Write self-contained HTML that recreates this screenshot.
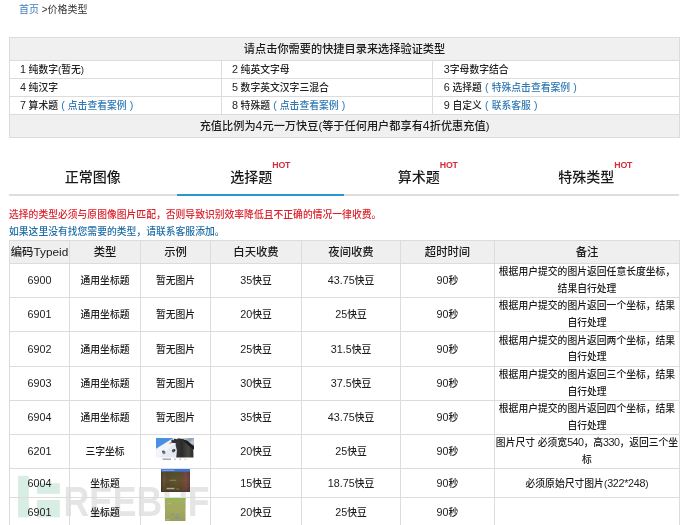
<!DOCTYPE html>
<html lang="zh-CN">
<head>
<meta charset="utf-8">
<title>价格类型</title>
<style>
*{box-sizing:border-box;margin:0;padding:0}
html,body{width:690px;height:525px;overflow:hidden;background:#fff}
body{position:relative;font-family:"Liberation Sans","Noto Sans CJK SC",sans-serif;font-size:9.8px;color:#222;-webkit-font-smoothing:antialiased}
a{text-decoration:none;color:#3079b5}
.page{position:absolute;left:0;top:0;width:690px;height:525px;overflow:hidden;will-change:transform;background:#fff}
.crumb{position:absolute;left:19px;top:1px;height:17px;line-height:17px;font-size:10px;color:#333;white-space:nowrap}
.crumb a{color:#3f7fb8}

/* quick directory table */
.quick{position:absolute;left:9px;top:37px;width:670px;border-collapse:collapse;table-layout:fixed;border:1px solid #d9d9d9}
.quick td,.quick th{border:1px solid #dcdcdc;white-space:nowrap;overflow:hidden}
.quick th{height:23px;background:#f0f0f0;font-weight:500;font-size:11.2px;text-align:center;color:#1c1c1c;line-height:20px}
.quick td{font-weight:500;height:18px;padding-left:9.9px;font-size:9.8px;line-height:16px;color:#222;text-align:left}
.quick .p{display:inline-block;width:9.8px;text-align:center;font-weight:normal;font-size:10.6px;line-height:0}
.quick tr.foot th{height:23px;line-height:19px;padding-top:1.6px}
.quick td.c3{padding-left:10.8px}

/* tabs */
.tabs{position:absolute;left:9px;top:156px;width:670px;height:40px;border-bottom:2px solid #dddddd;display:flex}
.tab{flex:1 1 0;height:40px;text-align:center;font-size:14px;font-weight:500;line-height:42px;color:#1a1a1a;position:relative;white-space:nowrap}
.tab.on:after{content:'';position:absolute;left:0;right:0;top:37.8px;height:2.3px;background:#2798cd}
.tab sup{font-size:8.8px;color:#d42f3a;font-weight:bold;letter-spacing:-0.2px;position:relative;top:-1.3px;vertical-align:top;line-height:20px}

.note{position:absolute;left:9px;white-space:nowrap;font-size:9.8px;line-height:14px;height:14px}
.note.red{top:207.5px;color:#dc1f29;font-weight:500}
.note.blue{top:225px;color:#1f6ea6;font-weight:500}

/* price table */
.price{position:absolute;left:9px;top:240px;width:670px;border-collapse:collapse;table-layout:fixed}
.price th,.price td{border:1px solid #dcdcdc;text-align:center;vertical-align:middle;overflow:hidden}
.price th{height:23px;background:#efefef;font-size:11.35px;font-weight:500;color:#1a1a1a;line-height:18px;white-space:nowrap}
.price td{font-weight:500;font-size:9.8px;line-height:16.4px;color:#1c1c1c;padding:2.4px 0 0}
.price tr.r1 td{height:34px}
.price tr.r1b td{height:35px}
.price tr.r2 td{height:29px}
.price th i{font-size:1.04em}
.price td.memo{padding:0;white-space:normal}
.price td.memo i{font-size:1.1em;letter-spacing:-0.55px}
.price td.memo.one{padding-top:2.4px}
.price td.memo.one i{font-size:1.1em;letter-spacing:-0.3px}
.price td.pic{padding:0}
i{font-style:normal;font-size:1.1em;line-height:0}
.thumb{display:block;margin:0 auto;position:relative}
.price td.pic{vertical-align:top;line-height:0}
.wm{position:absolute;left:0;top:0;width:690px;height:525px;pointer-events:none}
</style>
</head>
<body>
<div class="page">
<div class="crumb"><a>首页</a> &gt;价格类型</div>

<table class="quick">
<colgroup><col style="width:212px"><col style="width:211px"><col style="width:247px"></colgroup>
<tr><th colspan="3">请点击你需要的快捷目录来选择验证类型</th></tr>
<tr><td><i>1</i> 纯数字(暂无)</td><td><i>2</i> 纯英文字母</td><td class="c3"><i>3</i>字母数字结合</td></tr>
<tr><td><i>4</i> 纯汉字</td><td><i>5</i> 数字英文汉字三混合</td><td class="c3"><i>6</i> 选择题<a><b class="p">(</b>特殊点击查看案例<b class="p">)</b></a></td></tr>
<tr><td><i>7</i> 算术题<a><b class="p">(</b>点击查看案例<b class="p">)</b></a></td><td><i>8</i> 特殊题<a><b class="p">(</b>点击查看案例<b class="p">)</b></a></td><td class="c3"><i>9</i> 自定义<a><b class="p">(</b>联系客服<b class="p">)</b></a></td></tr>
<tr class="foot"><th colspan="3">充值比例为<i>4</i>元一万快豆(等于任何用户都享有<i>4</i>折优惠充值)</th></tr>
</table>

<div class="tabs">
<div class="tab">正常图像</div>
<div class="tab on">选择题<sup>HOT</sup></div>
<div class="tab">算术题<sup>HOT</sup></div>
<div class="tab">特殊类型<sup>HOT</sup></div>
</div>

<div class="note red">选择的类型必须与原图像图片匹配，否则导致识别效率降低且不正确的情况一律收费。</div>
<div class="note blue">如果这里没有找您需要的类型，请联系客服添加。</div>

<svg class="wm" width="690" height="525" viewBox="0 0 690 525">
<g fill="#d8ede4"><rect x="18" y="475.8" width="10.8" height="41.6"/><rect x="37" y="483.2" width="22.8" height="10.6"/><rect x="37" y="500" width="22.8" height="17.4"/></g>
<text x="63.5" y="515.8" font-family="'Liberation Sans',sans-serif" font-weight="bold" font-size="43.3" fill="#e5e5e5" textLength="146" lengthAdjust="spacingAndGlyphs">REEBUF</text>
</svg>
<table class="price">
<colgroup><col style="width:60px"><col style="width:71px"><col style="width:70px"><col style="width:91px"><col style="width:99px"><col style="width:94px"><col style="width:185px"></colgroup>
<tr><th>编码<i>Typeid</i></th><th>类型</th><th>示例</th><th>白天收费</th><th>夜间收费</th><th>超时时间</th><th>备注</th></tr>
<tr class="r1"><td><i>6900</i></td><td>通用坐标题</td><td>暂无图片</td><td><i>35</i>快豆</td><td><i>43.75</i>快豆</td><td><i>90</i>秒</td><td class="memo">根据用户提交的图片返回任意长度坐标，结果自行处理</td></tr>
<tr class="r1"><td><i>6901</i></td><td>通用坐标题</td><td>暂无图片</td><td><i>20</i>快豆</td><td><i>25</i>快豆</td><td><i>90</i>秒</td><td class="memo">根据用户提交的图片返回一个坐标，结果自行处理</td></tr>
<tr class="r1b"><td><i>6902</i></td><td>通用坐标题</td><td>暂无图片</td><td><i>25</i>快豆</td><td><i>31.5</i>快豆</td><td><i>90</i>秒</td><td class="memo">根据用户提交的图片返回两个坐标，结果自行处理</td></tr>
<tr class="r1"><td><i>6903</i></td><td>通用坐标题</td><td>暂无图片</td><td><i>30</i>快豆</td><td><i>37.5</i>快豆</td><td><i>90</i>秒</td><td class="memo">根据用户提交的图片返回三个坐标，结果自行处理</td></tr>
<tr class="r1"><td><i>6904</i></td><td>通用坐标题</td><td>暂无图片</td><td><i>35</i>快豆</td><td><i>43.75</i>快豆</td><td><i>90</i>秒</td><td class="memo">根据用户提交的图片返回四个坐标，结果自行处理</td></tr>
<tr class="r1"><td><i>6201</i></td><td>三字坐标</td><td class="pic"><svg class="thumb" style="margin-top:3px;left:-0.7px;top:-0.3px" width="38" height="23" viewBox="0 0 38 23">
<defs><linearGradient id="rk" x1="0" y1="0" x2="1" y2="1"><stop offset="0" stop-color="#dfe5ec"/><stop offset="0.45" stop-color="#8e9db0"/><stop offset="0.7" stop-color="#c4ccd6"/><stop offset="1" stop-color="#6f7d90"/></linearGradient>
<linearGradient id="pg" x1="0" y1="0" x2="1" y2="0"><stop offset="0" stop-color="#3a3a3a"/><stop offset="0.35" stop-color="#2c2c2c"/><stop offset="0.7" stop-color="#4a4744"/><stop offset="1" stop-color="#2a2a2a"/></linearGradient>
<filter id="sf" x="-5%" y="-5%" width="110%" height="110%"><feGaussianBlur stdDeviation="0.35"/></filter>
<clipPath id="c1"><rect x="0" y="0" width="38" height="19.4"/></clipPath></defs>
<g clip-path="url(#c1)"><g filter="url(#sf)">
<rect x="-1" y="-1" width="40" height="21.5" fill="#e4eaf2"/>
<polygon points="-1,-1 19,-1 -1,11.2" fill="#4b8fe2"/>
<polygon points="0,11.6 19,-0.5 21,3 3,19.5 0,19.5" fill="#f2f5f9"/>
<rect x="26" y="-1" width="13" height="9.5" fill="url(#rk)"/>
<polygon points="19.6,2.6 22.4,0.3 27.5,1.2 33.8,5.6 37.2,10.6 37.4,20 20.2,20 20.9,12.5 19.7,7.4" fill="url(#pg)"/>
<polygon points="26.5,1.6 31,2.6 38,8.2 38,11.8 31.5,6.8" fill="#1d1d1d"/>
<ellipse cx="18.4" cy="2.9" rx="3.1" ry="2.2" fill="#2b3038"/>
<circle cx="17.2" cy="1.5" r="0.75" fill="#f4f7fb"/>
<polygon points="12.3,5.8 15.9,3.8 16.5,5" fill="#a9564c"/>
<ellipse cx="7.9" cy="14.3" rx="1.5" ry="1.9" fill="#596270" opacity=".85"/>
<ellipse cx="6.9" cy="13.4" rx="0.8" ry="0.9" fill="#39404b"/>
<ellipse cx="17.3" cy="12.7" rx="1.4" ry="1.7" fill="#3a414c" opacity=".9"/>
<ellipse cx="18.6" cy="12.3" rx="0.7" ry="1.2" fill="#2c323b"/>
</g></g>
<rect x="6.5" y="20.4" width="8.5" height="1.6" fill="#8a8a8a" opacity=".7"/>
<rect x="18" y="20.6" width="2" height="1.2" fill="#bdbdbd"/><rect x="23.5" y="20.6" width="1.6" height="1.2" fill="#b0b0b0"/><rect x="28" y="20.8" width="2.4" height="1" fill="#d6d6d6"/>
</svg></td><td><i>20</i>快豆</td><td><i>25</i>快豆</td><td><i>90</i>秒</td><td class="memo">图片尺寸 必须宽<i>540</i>，高<i>330</i>，返回三个坐标</td></tr>
<tr class="r2"><td><i>6004</i></td><td>坐标题</td><td class="pic"><svg class="thumb" style="margin-top:0.5px;left:-0.3px;top:-0.8px" width="29.4" height="23" viewBox="0 0 29 23" preserveAspectRatio="none">
<defs><linearGradient id="bw" x1="0" y1="0" x2="1" y2="0"><stop offset="0" stop-color="#4a3a2a"/><stop offset="0.1" stop-color="#6a5434"/><stop offset="0.2" stop-color="#5a4a2e"/><stop offset="0.45" stop-color="#5b552f"/><stop offset="0.7" stop-color="#65502f"/><stop offset="0.86" stop-color="#7e4c44"/><stop offset="1" stop-color="#5c4032"/></linearGradient>
<linearGradient id="bw2" x1="0" y1="0" x2="0" y2="1"><stop offset="0" stop-color="#000" stop-opacity=".12"/><stop offset="0.5" stop-color="#000" stop-opacity="0"/><stop offset="1" stop-color="#000" stop-opacity=".18"/></linearGradient></defs>
<rect width="29" height="23" fill="url(#bw)"/>
<rect width="29" height="23" fill="url(#bw2)"/>
<rect width="29" height="2.7" fill="#3d74d8"/>
<rect x="1.2" y="0.8" width="12" height="1.1" fill="#9db8ea" opacity=".75"/>
<rect x="8.5" y="10.8" width="6.5" height="1" fill="#9a8e62" opacity=".8"/>
<rect x="5.5" y="18.8" width="7.8" height="1.5" fill="#c4b4a2" opacity=".85"/>
<rect x="15" y="19.6" width="3" height="0.9" fill="#968e6a" opacity=".8"/>
<rect x="0" y="21.6" width="29" height="1.4" fill="#473729" opacity=".6"/>
</svg></td><td><i>15</i>快豆</td><td><i>18.75</i>快豆</td><td><i>90</i>秒</td><td class="memo one">必须原始尺寸图片(<i>322*248</i>)</td></tr>
<tr class="r2"><td><i>6901</i></td><td>坐标题</td><td class="pic"><svg class="thumb" style="margin-top:0.6px;top:-0.4px" width="20.5" height="23.2" viewBox="0 0 20.5 23" preserveAspectRatio="none">
<defs><linearGradient id="gw" x1="0" y1="0" x2="0" y2="1"><stop offset="0" stop-color="#93bd55"/><stop offset="0.08" stop-color="#a4ae62"/><stop offset="0.6" stop-color="#a3a85e"/><stop offset="1" stop-color="#989f5c"/></linearGradient></defs>
<rect width="20.5" height="23" fill="url(#gw)"/>
<rect width="20.5" height="1.2" fill="#86c24a"/>
<rect x="5.8" y="15.6" width="3.2" height="1.5" fill="#7f93a6" opacity=".85"/><rect x="11" y="16" width="3" height="1.4" fill="#8497a8" opacity=".8"/>
<rect x="10" y="18.4" width="4.5" height="1.6" fill="#7d90a8" opacity=".85"/>
<rect x="0.6" y="21" width="4" height="1.2" fill="#b9c0a8" opacity=".8"/>
<rect x="3.4" y="5.2" width="2.6" height="0.9" fill="#c3c88e" opacity=".8"/>
</svg></td><td><i>20</i>快豆</td><td><i>25</i>快豆</td><td><i>90</i>秒</td><td class="memo"></td></tr>
</table>
</div>
</body>
</html>
